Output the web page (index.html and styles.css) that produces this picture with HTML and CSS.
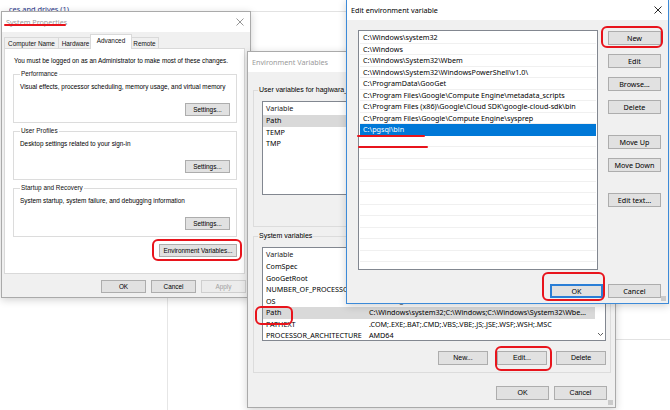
FILE: index.html
```html
<!DOCTYPE html>
<html lang="en">

<head>
    <meta charset="UTF-8">
    <title>Edit environment variable</title>
    <link rel="stylesheet" href="styles.css">
</head>

<body>
    <div class="desktop">
        <!-- explorer window in the background -->
        <div class="explorer">
            <div class="explorer-head">Devices and drives (1)</div>
            <div class="explorer-rule"></div>
            <div class="explorer-pane"></div>
            <div class="explorer-row"></div>
        </div>

        <!-- System Properties -->
        <div class="window sysprops">
            <div class="titlebar">
                <span class="title">System Properties</span>
                <svg class="close" width="8" height="8" viewBox="0 0 8 8"><path d="M0.5 0.5 L7.5 7.5 M7.5 0.5 L0.5 7.5" /></svg>
            </div>
            <div class="tabs">
                <div class="tab tab-name">Computer Name</div>
                <div class="tab tab-hw">Hardware</div>
                <div class="tab tab-adv active">Advanced</div>
                <div class="tab tab-rem">Remote</div>
            </div>
            <div class="tab-page">
                <p class="note">You must be logged on as an Administrator to make most of these changes.</p>
                <fieldset class="group">
                    <legend>Performance</legend>
                    <p>Visual effects, processor scheduling, memory usage, and virtual memory</p>
                    <div class="group-actions"><button class="btn settings">Settings...</button></div>
                </fieldset>
                <fieldset class="group">
                    <legend>User Profiles</legend>
                    <p>Desktop settings related to your sign-in</p>
                    <div class="group-actions"><button class="btn settings">Settings...</button></div>
                </fieldset>
                <fieldset class="group">
                    <legend>Startup and Recovery</legend>
                    <p>System startup, system failure, and debugging information</p>
                    <div class="group-actions"><button class="btn settings">Settings...</button></div>
                </fieldset>
                <div class="env-row"><button class="btn env-btn">Environment Variables...</button></div>
            </div>
            <div class="dialog-buttons">
                <button class="btn">OK</button>
                <button class="btn">Cancel</button>
                <button class="btn" disabled>Apply</button>
            </div>
        </div>

        <!-- Environment Variables -->
        <div class="window envvars">
            <div class="titlebar">
                <span class="title">Environment Variables</span>
            </div>
            <div class="env-body">
                <fieldset class="var-group">
                    <legend>User variables for hagiwara_kazuhito</legend>
                    <div class="listview user-list">
                        <div class="lv-head"><span class="col-name">Variable</span></div>
                        <div class="lv-row selected-dim"><span class="col-name">Path</span></div>
                        <div class="lv-row"><span class="col-name">TEMP</span></div>
                        <div class="lv-row"><span class="col-name">TMP</span></div>
                    </div>
                    <div class="var-actions">
                        <button class="btn">New...</button>
                        <button class="btn">Edit...</button>
                        <button class="btn">Delete</button>
                    </div>
                </fieldset>
                <fieldset class="var-group">
                    <legend>System variables</legend>
                    <div class="listview sys-list">
                        <div class="lv-rows">
                            <div class="lv-head"><span class="col-name">Variable</span></div>
                            <div class="lv-row"><span class="col-name">ComSpec</span><span class="col-value">C:\Windows\system32\cmd.exe</span></div>
                            <div class="lv-row"><span class="col-name">GooGetRoot</span><span class="col-value">C:\ProgramData\GooGet</span></div>
                            <div class="lv-row"><span class="col-name">NUMBER_OF_PROCESSORS</span><span class="col-value">1</span></div>
                            <div class="lv-row"><span class="col-name">OS</span><span class="col-value">Windows_NT</span></div>
                            <div class="lv-row selected-dim"><span class="col-name">Path</span><span class="col-value">C:\Windows\system32;C:\Windows;C:\Windows\System32\Wbem;C:\Windows\System32\WindowsPowerShell\v1.0\</span></div>
                            <div class="lv-row"><span class="col-name">PATHEXT</span><span class="col-value">.COM;.EXE;.BAT;.CMD;.VBS;.VBE;.JS;.JSE;.WSF;.WSH;.MSC</span></div>
                            <div class="lv-row"><span class="col-name">PROCESSOR_ARCHITECTURE</span><span class="col-value">AMD64</span></div>
                        </div>
                        <div class="scrollbar">
                            <svg width="7" height="5" viewBox="0 0 7 5"><path d="M1 1 L3.5 3.5 L6 1" /></svg>
                        </div>
                    </div>
                    <div class="var-actions">
                        <button class="btn">New...</button>
                        <button class="btn">Edit...</button>
                        <button class="btn">Delete</button>
                    </div>
                </fieldset>
                <div class="dialog-buttons">
                    <button class="btn">OK</button>
                    <button class="btn">Cancel</button>
                </div>
            </div>
            <div class="grip"></div>
        </div>

        <!-- Edit environment variable -->
        <div class="window edit active">
            <div class="titlebar">
                <span class="title">Edit environment variable</span>
                <svg class="close" width="8" height="8" viewBox="0 0 8 8"><path d="M0.5 0.5 L7.5 7.5 M7.5 0.5 L0.5 7.5" /></svg>
            </div>
            <div class="edit-body">
                <div class="edit-main">
                    <ul class="path-list">
                        <li>C:\Windows\system32</li>
                        <li>C:\Windows</li>
                        <li>C:\Windows\System32\Wbem</li>
                        <li>C:\Windows\System32\WindowsPowerShell\v1.0\</li>
                        <li>C:\ProgramData\GooGet</li>
                        <li>C:\Program Files\Google\Compute Engine\metadata_scripts</li>
                        <li>C:\Program Files (x86)\Google\Cloud SDK\google-cloud-sdk\bin</li>
                        <li>C:\Program Files\Google\Compute Engine\sysprep</li>
                        <li class="selected">C:\pgsql\bin</li>
                        <li></li><li></li><li></li><li></li><li></li><li></li>
                        <li></li><li></li><li></li><li></li><li></li><li></li>
                    </ul>
                    <div class="side-buttons">
                        <button class="btn">New</button>
                        <button class="btn">Edit</button>
                        <button class="btn">Browse...</button>
                        <button class="btn">Delete</button>
                        <button class="btn spaced">Move Up</button>
                        <button class="btn">Move Down</button>
                        <button class="btn spaced">Edit text...</button>
                    </div>
                </div>
                <div class="dialog-buttons">
                    <button class="btn default">OK</button>
                    <button class="btn">Cancel</button>
                </div>
            </div>
            <div class="grip"></div>
        </div>

        <!-- red annotations drawn over the screenshot -->
        <div class="mark underline" style="left:4px; top:24px; width:62px;"></div>
        <div class="mark ring" style="left:152px; top:239px; width:90px; height:22px;"></div>
        <div class="mark ring" style="left:255px; top:306px; width:38px; height:19px;"></div>
        <div class="mark ring" style="left:495px; top:346px; width:57px; height:25px;"></div>
        <div class="mark ring" style="left:601px; top:26px; width:62px; height:22px;"></div>
        <div class="mark ring" style="left:542px; top:272px; width:63px; height:29px;"></div>
        <div class="mark underline" style="left:357px; top:135px; width:68px;"></div>
        <div class="mark underline" style="left:358px; top:146px; width:70px;"></div>
    </div>
</body>

</html>
```

FILE: styles.css
```css
* {
    box-sizing: border-box;
}

body {
    margin: 0;
    font-family: "Noto Sans", sans-serif;
    font-size: 7.2px;
    line-height: 10px;
    color: #000;
    background: #fff;
}

.desktop {
    position: relative;
    width: 670px;
    height: 410px;
    overflow: hidden;
    background: #fff;
}

/* background explorer */
.explorer {
    position: absolute;
    inset: 0;
}

.explorer-head {
    margin: 4px 0 0 9px;
    width: 120px;
    overflow: hidden;
    white-space: nowrap;
    text-indent: -15px;
    color: #1e3287;
    font-size: 7.4px;
}

.explorer-rule {
    margin: -3px 0 0 250px;
    width: 100px;
    border-top: 1px solid #e2e2e2;
}

.explorer-pane {
    margin: 286px 0 0 167px;
    height: 120px;
    width: 1px;
    background: #e6e6e6;
}

.explorer-row {
    margin: -79px 0 0 616px;
    border-top: 1px solid #e2e2e2;
}

/* windows */
.window {
    position: absolute;
    display: flex;
    flex-direction: column;
    background: #f0f0f0;
    border: 1px solid #aaaaaa;
    box-shadow: 0 2px 8px rgba(0, 0, 0, 0.18);
}

.titlebar {
    flex: none;
    height: 20px;
    display: flex;
    align-items: center;
    justify-content: space-between;
    padding: 0 6px 0 4px;
    background: #fff;
}

.title {
    color: #9a9a9a;
}

.close {
    stroke: #8a8a8a;
    stroke-width: 0.9;
    fill: none;
}

.window.active {
    border-color: #3c8ad8;
}

.window.active .title {
    color: #000;
}

.window.active .close {
    stroke: #111;
}

.btn {
    height: 14px;
    padding: 0;
    font-family: inherit;
    font-size: inherit;
    line-height: 12px;
    color: #000;
    background: #e1e1e1;
    border: 1px solid #adadad;
    border-radius: 0;
}

.btn:disabled {
    color: #a0a0a0;
    background: #ececec;
    border-color: #cfcfcf;
}

.btn.default {
    border-color: #2a7ed6;
    box-shadow: inset 0 0 0 1px #2a7ed6;
}

.dialog-buttons {
    display: flex;
    justify-content: flex-end;
    gap: 5px;
}

.grip {
    position: absolute;
    right: 2px;
    bottom: 2px;
    width: 5px;
    height: 5px;
    background: radial-gradient(circle, #b5b5b5 0.6px, transparent 0.9px) 0 0 / 2px 2px;
}

/* System Properties: dialog font */
.sysprops {
    left: 1px;
    top: 11px;
    width: 250px;
    height: 287px;
}

.sysprops .tabs,
.sysprops .tab-page,
.sysprops .dialog-buttons {
    font-family: "Liberation Sans", Arial, sans-serif;
    font-size: 6.4px;
}

.tabs {
    display: flex;
    align-items: flex-end;
    height: 16px;
    padding: 0 0 0 2px;
    margin-top: 1px;
}

.tab {
    height: 12px;
    line-height: 11px;
    text-align: center;
    color: #111;
    background: #f0f0f0;
    border: 1px solid #d9d9d9;
    border-bottom: none;
    margin-right: -1px;
}

.tab-name {
    width: 55px;
}

.tab-hw {
    width: 35px;
}

.tab-adv {
    width: 42px;
}

.tab-rem {
    width: 29px;
}

.tab.active {
    position: relative;
    height: 15px;
    line-height: 12px;
    background: #fff;
    margin: 0 -2px 0 -2px;
    z-index: 1;
}

.tab-page {
    height: 226px;
    margin: -1px 5px 0 2px;
    padding: 7px 7px 0 8px;
    background: #fff;
    border: 1px solid #d9d9d9;
}

.note {
    margin: 0 0 3px 1px;
    white-space: nowrap;
}

.group {
    margin: 0 0 3px 0;
    padding: 0 6px 6px 6px;
    border: 1px solid #dcdcdc;
    min-width: 0;
}

.group legend {
    padding: 0 1px;
    line-height: 10px;
    color: #111;
}

.group p {
    margin: 3px 0 0 0;
    white-space: nowrap;
}

.group-actions {
    display: flex;
    justify-content: flex-end;
    margin-top: 11px;
}

.settings {
    width: 45px;
    height: 13px;
}

.env-row {
    display: flex;
    justify-content: flex-end;
    margin-top: 7px;
}

.env-btn {
    width: 78px;
    height: 13px;
}

.sysprops .dialog-buttons {
    margin-top: 6px;
    padding-right: 4px;
}

.sysprops .dialog-buttons .btn {
    width: 45px;
    height: 13px;
}

/* Environment Variables */
.envvars {
    left: 247px;
    top: 51px;
    width: 369px;
    height: 357px;
}

.env-body {
    padding: 13px 4px 0 5px;
}

.var-group legend,
.envvars .btn {
    font-family: "Liberation Sans", Arial, sans-serif;
    font-size: 7px;
}

.var-group {
    margin: 0 0 4px 0;
    padding: 0 4px 7px 8px;
    border: 1px solid #dcdcdc;
    min-width: 0;
}

.var-group legend {
    margin-left: -4px;
    padding: 0 1px;
    line-height: 10px;
}

.listview {
    height: 94px;
    margin-top: 6px;
    background: #fff;
    border: 1px solid #828790;
    overflow: hidden;
}

.sys-list {
    display: flex;
}

.lv-rows {
    flex: 1;
    min-width: 0;
}

.lv-head,
.lv-row {
    display: flex;
    white-space: nowrap;
}

.lv-head {
    height: 13px;
    line-height: 13px;
    color: #1a1a1a;
}

.lv-row {
    height: 11.5px;
    line-height: 11.5px;
}

.lv-row.selected-dim {
    background: #d9d9d9;
}

.col-name {
    flex: none;
    width: 105px;
    padding-left: 3px;
    overflow: hidden;
}

.col-value {
    flex: 1;
    min-width: 0;
    padding: 0 4px 0 1px;
    overflow: hidden;
    text-overflow: ellipsis;
}

.scrollbar {
    flex: none;
    width: 10px;
    display: flex;
    align-items: flex-end;
    justify-content: center;
    padding-bottom: 3px;
    background: #fff;
}

.scrollbar path {
    stroke: #606060;
    stroke-width: 1;
    fill: none;
}

.var-actions {
    display: flex;
    justify-content: flex-end;
    gap: 9px;
    margin-top: 10px;
}

.var-actions .btn {
    width: 50px;
}

.envvars .dialog-buttons {
    margin-top: 13px;
    padding-right: 4px;
}

.envvars .dialog-buttons .btn {
    width: 53px;
}

/* Edit environment variable */
.edit {
    left: 346px;
    top: -1px;
    width: 323px;
    height: 305px;
}

.edit-body {
    padding: 10px 7px 0 11px;
}

.edit-main {
    display: flex;
    gap: 10px;
}

.path-list {
    flex: none;
    width: 240px;
    height: 240px;
    margin: 0;
    padding: 1px 1px 0 1px;
    list-style: none;
    background: #fff;
    border: 1px solid #828790;
    overflow: hidden;
}

.path-list li {
    height: 11.5px;
    line-height: 11px;
    padding-left: 3px;
    white-space: nowrap;
    border-bottom: 1px solid #f0f0f0;
}

.path-list li.selected {
    color: #fff;
    background: #0078d7;
    border-bottom-color: #0078d7;
}

.side-buttons {
    flex: 1;
    display: flex;
    flex-direction: column;
    gap: 9px;
    padding-top: 1px;
}

.side-buttons .btn.spaced {
    margin-top: 12px;
}

.edit .dialog-buttons {
    margin-top: 14px;
}

.edit .dialog-buttons .btn {
    width: 53px;
}

/* annotations */
.mark {
    position: absolute;
    z-index: 5;
}

.mark.underline {
    height: 2px;
    background: #e8141c;
    border-radius: 1px;
}

.mark.ring {
    border: 2px solid #e8141c;
    border-radius: 6px;
}
```
